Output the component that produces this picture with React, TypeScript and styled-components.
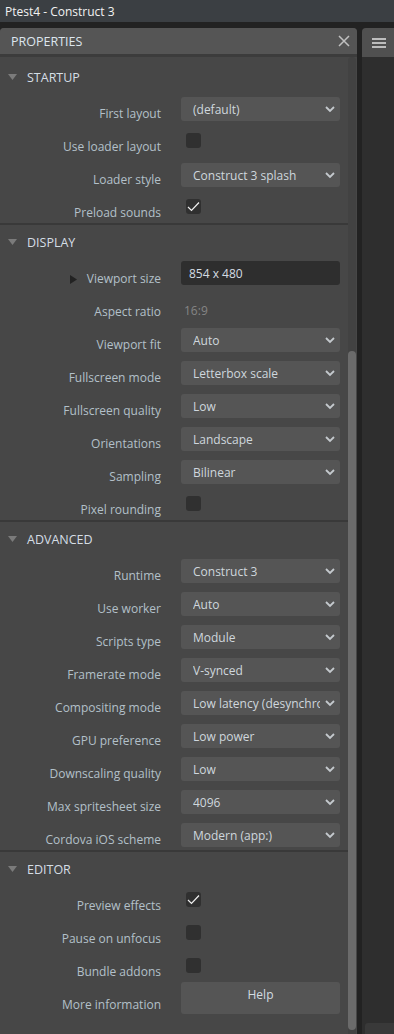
import React from 'react';
import styled, { createGlobalStyle } from 'styled-components';

type Prop = {
  label: string;
  kind: 'select' | 'check' | 'text' | 'value' | 'button';
  value?: string;
  checked?: boolean;
  expander?: boolean;
};

type Section = {
  title: string;
  props: Prop[];
};

const sections: Section[] = [
  {
    title: 'Startup',
    props: [
      { label: 'First layout', kind: 'select', value: '(default)' },
      { label: 'Use loader layout', kind: 'check' },
      { label: 'Loader style', kind: 'select', value: 'Construct 3 splash' },
      { label: 'Preload sounds', kind: 'check', checked: true },
    ],
  },
  {
    title: 'Display',
    props: [
      { label: 'Viewport size', kind: 'text', value: '854 x 480', expander: true },
      { label: 'Aspect ratio', kind: 'value', value: '16:9' },
      { label: 'Viewport fit', kind: 'select', value: 'Auto' },
      { label: 'Fullscreen mode', kind: 'select', value: 'Letterbox scale' },
      { label: 'Fullscreen quality', kind: 'select', value: 'Low' },
      { label: 'Orientations', kind: 'select', value: 'Landscape' },
      { label: 'Sampling', kind: 'select', value: 'Bilinear' },
      { label: 'Pixel rounding', kind: 'check' },
    ],
  },
  {
    title: 'Advanced',
    props: [
      { label: 'Runtime', kind: 'select', value: 'Construct 3' },
      { label: 'Use worker', kind: 'select', value: 'Auto' },
      { label: 'Scripts type', kind: 'select', value: 'Module' },
      { label: 'Framerate mode', kind: 'select', value: 'V-synced' },
      { label: 'Compositing mode', kind: 'select', value: 'Low latency (desynchronized)' },
      { label: 'GPU preference', kind: 'select', value: 'Low power' },
      { label: 'Downscaling quality', kind: 'select', value: 'Low' },
      { label: 'Max spritesheet size', kind: 'select', value: '4096' },
      { label: 'Cordova iOS scheme', kind: 'select', value: 'Modern (app:)' },
    ],
  },
  {
    title: 'Editor',
    props: [
      { label: 'Preview effects', kind: 'check', checked: true },
      { label: 'Pause on unfocus', kind: 'check' },
      { label: 'Bundle addons', kind: 'check' },
      { label: 'More information', kind: 'button', value: 'Help' },
    ],
  },
];

const GlobalStyle = createGlobalStyle`
  html, body {
    margin: 0;
    padding: 0;
    background: #222222;
    font-family: 'Open Sans', 'Noto Sans', sans-serif;
  }
`;

const Page = styled.div`
  width: 394px;
  height: 1034px;
  display: flex;
  flex-direction: column;
  overflow: hidden;
`;

const TitleBar = styled.div`
  height: 22px;
  flex: none;
  background: #3b3f43;
  color: #f2f2f2;
  font-size: 12px;
  line-height: 23px;
  padding-left: 5px;
`;

const Workspace = styled.div`
  flex: 1;
  display: flex;
  gap: 5px;
  padding-top: 6px;
  min-height: 0;
`;

const Panel = styled.div`
  width: 357px;
  flex: none;
  display: flex;
  flex-direction: column;
  background: #474747;
  border-radius: 4px 4px 0 0;
  overflow: hidden;
`;

const PanelHeader = styled.div`
  height: 26px;
  flex: none;
  background: #555555;
  display: flex;
  align-items: center;
  justify-content: space-between;
  padding: 0 7px 0 11px;
  color: #dde6ee;
  font-size: 12.5px;
`;

const PanelBody = styled.div`
  flex: 1;
  display: flex;
  min-height: 0;
  border-top: 3px solid #3c3c3c;
`;

const ScrollArea = styled.div`
  flex: 1;
  min-width: 0;
  padding-top: 3px;
`;

const Scrollbar = styled.div`
  width: 8px;
  flex: none;
  margin-right: 1px;
  background: #424242;
  border-radius: 4px 4px 0 0;
  display: flex;
  flex-direction: column;
`;

const ScrollThumb = styled.div<{ $offset: number }>`
  margin-top: ${(p) => p.$offset}px;
  flex: 1;
  background: #6b6b6b;
  border-radius: 4px;
  margin-bottom: 4px;
`;

const SectionBox = styled.div<{ $last?: boolean }>`
  border-bottom: ${(p) => (p.$last ? 'none' : '2px solid #393939')};
`;

const SectionHeader = styled.div`
  height: 31px;
  display: flex;
  align-items: center;
  gap: 10px;
  padding: 3px 0 0 8px;
  box-sizing: border-box;
`;

const SectionTitle = styled.span`
  color: #d5dee5;
  font-size: 12.5px;
  text-transform: uppercase;
`;

const Row = styled.div`
  display: grid;
  grid-template-columns: 161px 159px;
  column-gap: 20px;
  height: 33px;
`;

const Label = styled.div`
  display: flex;
  justify-content: flex-end;
  align-items: center;
  gap: 10px;
  padding-top: 14px;
  line-height: 18px;
  height: 18px;
  color: #b3c0c9;
  font-size: 12px;
  white-space: nowrap;
`;

const Select = styled.div`
  margin-top: 6px;
  height: 24px;
  display: flex;
  align-items: center;
  gap: 4px;
  padding: 0 4px 0 12px;
  background: #555555;
  border-radius: 3px;
  color: #cfd7dd;
  font-size: 12px;
`;

const SelectText = styled.span`
  flex: 1;
  overflow: hidden;
  white-space: nowrap;
`;

const TextInput = styled.div`
  margin-top: 5px;
  height: 24px;
  display: flex;
  align-items: center;
  padding-left: 8px;
  background: #2e2e2e;
  border-radius: 3px;
  color: #d4dce2;
  font-size: 12px;
`;

const StaticValue = styled.div`
  padding: 13px 0 0 3px;
  line-height: 18px;
  color: #858585;
  font-size: 12px;
`;

const Checkbox = styled.div`
  margin: 9px 0 0 5px;
  width: 15px;
  height: 15px;
  border-radius: 3px;
  background: #303030;
  display: flex;
  align-items: center;
  justify-content: center;
`;

const Button = styled.div`
  height: 32px;
  background: #555555;
  border-radius: 3px;
  color: #d4dce2;
  font-size: 12px;
  display: flex;
  justify-content: center;
  padding-top: 4px;
  box-sizing: border-box;
`;

const SidePanel = styled.div`
  flex: 1;
  display: flex;
  flex-direction: column;
  background: #2e2e2e;
  border-radius: 4px 0 0 0;
  overflow: hidden;
`;

const SideHeader = styled.div`
  height: 29px;
  flex: none;
  background: #505050;
  display: flex;
  align-items: center;
  padding-left: 10px;
`;

const SideBody = styled.div`
  flex: 1;
`;

const SideFooter = styled.div`
  height: 11px;
  flex: none;
  margin-left: 3px;
  background: #393939;
  border-radius: 3px 0 0 0;
`;

const Chevron = () => (
  <svg width="12" height="8" viewBox="0 0 12 8">
    <path d="M2 2 L6 6 L10 2" fill="none" stroke="#c4c9cd" strokeWidth="1.8" />
  </svg>
);

const Caret = () => (
  <svg width="9" height="7" viewBox="0 0 9 7">
    <path d="M0 0 H9 L4.5 6 Z" fill="#7b7b7b" />
  </svg>
);

const Expander = () => (
  <svg width="7" height="9" viewBox="0 0 7 9">
    <path d="M0 0 L7 4.5 L0 9 Z" fill="#222222" />
  </svg>
);

const Check = () => (
  <svg width="13" height="11" viewBox="0 0 13 11">
    <path d="M1 6 L4.5 9.5 L12 1.5" fill="none" stroke="#f0f0f0" strokeWidth="1.2" />
  </svg>
);

const CloseIcon = () => (
  <svg width="12" height="12" viewBox="0 0 12 12">
    <path d="M1 1 L11 11 M11 1 L1 11" stroke="#c0c0c0" strokeWidth="1.5" />
  </svg>
);

const MenuIcon = () => (
  <svg width="14" height="10" viewBox="0 0 14 10">
    <path d="M0 1 H14 M0 5 H14 M0 9 H14" stroke="#bdbdbd" strokeWidth="2" />
  </svg>
);

const Control = ({ prop }: { prop: Prop }) => {
  switch (prop.kind) {
    case 'select':
      return (
        <Select>
          <SelectText>{prop.value}</SelectText>
          <Chevron />
        </Select>
      );
    case 'check':
      return <Checkbox>{prop.checked && <Check />}</Checkbox>;
    case 'text':
      return <TextInput>{prop.value}</TextInput>;
    case 'value':
      return <StaticValue>{prop.value}</StaticValue>;
    case 'button':
      return <Button>{prop.value}</Button>;
  }
};

const App = () => {
  return (
    <Page>
      <GlobalStyle />
      <TitleBar>Ptest4 - Construct 3</TitleBar>
      <Workspace>
        <Panel>
          <PanelHeader>
            PROPERTIES
            <CloseIcon />
          </PanelHeader>
          <PanelBody>
            <ScrollArea>
              {sections.map((section, i) => (
                <SectionBox key={section.title} $last={i === sections.length - 1}>
                  <SectionHeader>
                    <Caret />
                    <SectionTitle>{section.title}</SectionTitle>
                  </SectionHeader>
                  {section.props.map((prop) => (
                    <Row key={prop.label}>
                      <Label>
                        {prop.expander && <Expander />}
                        {prop.label}
                      </Label>
                      <Control prop={prop} />
                    </Row>
                  ))}
                </SectionBox>
              ))}
            </ScrollArea>
            <Scrollbar>
              <ScrollThumb $offset={294} />
            </Scrollbar>
          </PanelBody>
        </Panel>
        <SidePanel>
          <SideHeader>
            <MenuIcon />
          </SideHeader>
          <SideBody />
          <SideFooter />
        </SidePanel>
      </Workspace>
    </Page>
  );
};

export default App;
